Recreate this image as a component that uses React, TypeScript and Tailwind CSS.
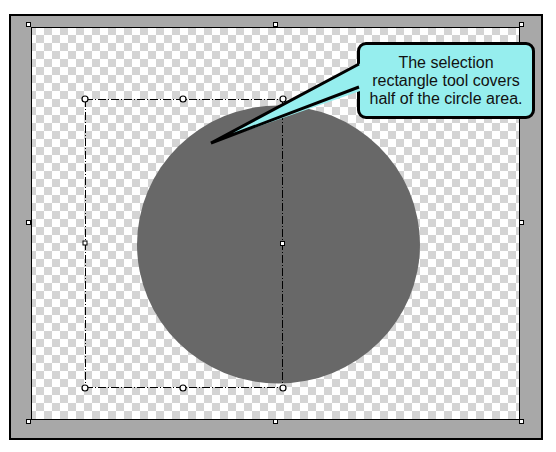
const frameHandles = [
  { x: 26, y: 22 },
  { x: 273, y: 22 },
  { x: 519, y: 22 },
  { x: 26, y: 220 },
  { x: 519, y: 220 },
  { x: 26, y: 419 },
  { x: 273, y: 419 },
  { x: 519, y: 419 },
];

const selectionDots = [
  [85, 99],
  [183, 99],
  [283, 99],
  [85, 388],
  [183, 388],
  [283, 388],
];

const Drawing = () => (
  <svg
    className="absolute left-0 top-0 pointer-events-none"
    width={556}
    height={452}
    viewBox="0 0 556 452"
  >
    <ellipse cx={278.5} cy={244.5} rx={141.5} ry={139} fill="#686868" />
    <g stroke="#000" strokeWidth={1} fill="none" strokeDasharray="8 2 1 2">
      <line x1={85} y1={99.5} x2={283} y2={99.5} />
      <line x1={85} y1={387.5} x2={283} y2={387.5} />
      <line x1={85.5} y1={99} x2={85.5} y2={388} />
      <line x1={282.5} y1={99} x2={282.5} y2={388} />
    </g>
    {selectionDots.map(([x, y], i) => (
      <circle key={i} cx={x} cy={y} r={3} fill="#fff" stroke="#000" strokeWidth={1.2} />
    ))}
    <rect x={83} y={241} width={4} height={4} fill="#fff" stroke="#000" strokeWidth={1} />
    <rect x={280.5} y={241.5} width={4} height={4} fill="#fff" stroke="#000" strokeWidth={1} />
  </svg>
);

const Tail = () => (
  <svg
    className="absolute left-0 top-0 pointer-events-none"
    width={556}
    height={452}
    viewBox="0 0 556 452"
  >
    <polygon points="211,143 363,62 363,90" fill="#96eeee" />
    <polyline
      points="359,64 211,143 359,87"
      fill="none"
      stroke="#000"
      strokeWidth={3}
      strokeLinejoin="miter"
    />
  </svg>
);

export default function App() {
  return (
    <div className="relative w-[556px] h-[452px] bg-white pl-[9px] pt-[14px] font-['Liberation_Sans',Arial,sans-serif]">
      <div className="w-[534px] h-[426px] border-2 border-black bg-[#a8a8a8] pl-[20px] pt-[11px]">
        <div className="w-[489px] h-[393px] border border-black bg-[conic-gradient(#d4d4d4_90deg,#fff_90deg_180deg,#d4d4d4_180deg_270deg,#fff_270deg)] bg-[length:16px_16px] bg-[position:4px_-1px]" />
      </div>

      <Drawing />

      <div className="absolute left-[357px] top-[42px] w-[178px] h-[77px] rounded-[9px] border-[3px] border-black bg-[#96eeee] flex items-center justify-center text-center text-[16px] leading-[18px] text-[#111]">
        <p>
          The selection
          <br />
          rectangle tool covers
          <br />
          half of the circle area.
        </p>
      </div>

      <Tail />

      {frameHandles.map((h, i) => (
        <div
          key={i}
          className="absolute w-[5px] h-[5px] border border-black bg-white"
          style={{ left: h.x, top: h.y }}
        />
      ))}
    </div>
  );
}
